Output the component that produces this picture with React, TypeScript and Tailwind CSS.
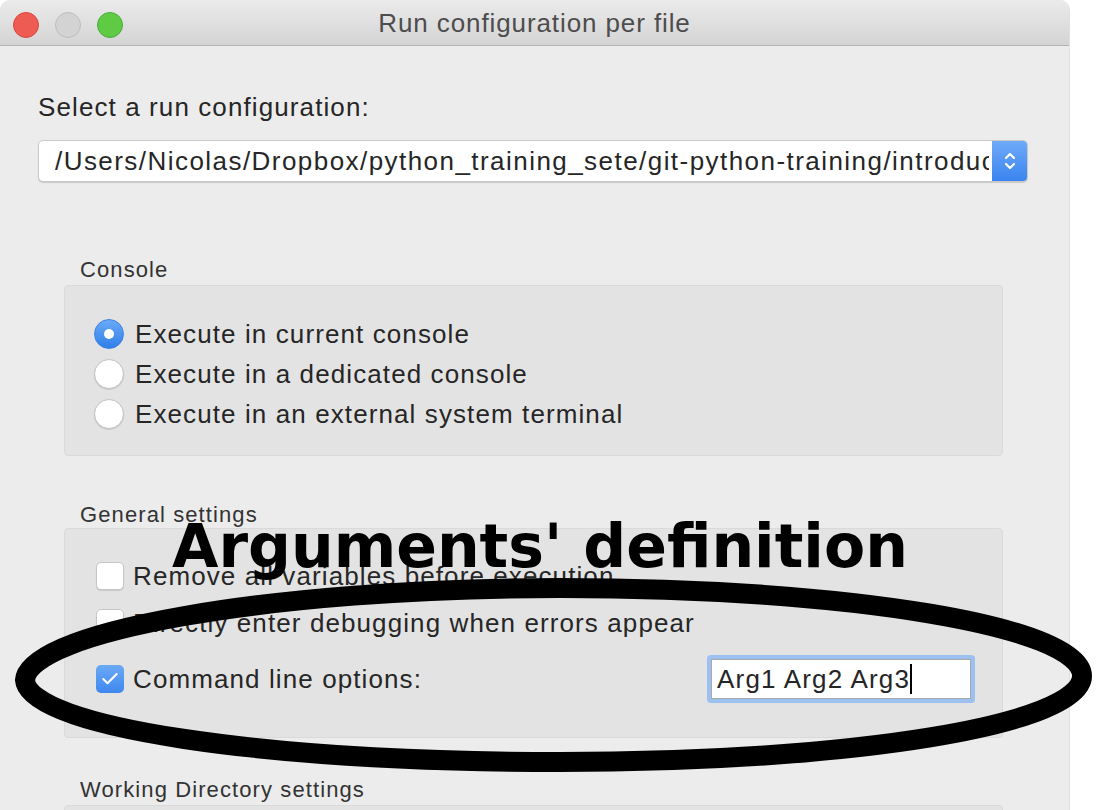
import { Check } from 'lucide-react';

const sans = "font-['Liberation_Sans',Arial,sans-serif]";

function Radio({ on }: { on?: boolean }) {
  if (on) {
    return (
      <span className="w-[30px] h-[30px] rounded-full bg-gradient-to-b from-[#6aaaf7] to-[#2f7ee9] border border-[#3b82e6] flex items-center justify-center shrink-0">
        <span className="w-[10px] h-[10px] rounded-full bg-white" />
      </span>
    );
  }
  return <span className="w-[30px] h-[30px] rounded-full bg-white border border-[#c2c2c2] shadow-[0_1px_1px_rgba(0,0,0,0.12)] shrink-0" />;
}

function Box({ on }: { on?: boolean }) {
  if (on) {
    return (
      <span className="w-[28px] h-[28px] rounded-[5px] bg-gradient-to-b from-[#6aa9f6] to-[#3e87ee] flex items-center justify-center shrink-0">
        <Check className="w-[20px] h-[20px] text-white" strokeWidth={2.5} />
      </span>
    );
  }
  return <span className="w-[28px] h-[28px] rounded-[5px] bg-white border border-[#c6c6c6] shadow-[0_1px_1px_rgba(0,0,0,0.12)] shrink-0" />;
}

export default function App() {
  const radios = [
    { label: 'Execute in current console', on: true },
    { label: 'Execute in a dedicated console', on: false },
    { label: 'Execute in an external system terminal', on: false },
  ];

  return (
    <div className={`relative w-[1113px] h-[810px] bg-white overflow-hidden ${sans}`}>
      {/* Window */}
      <div className="w-[1070px] h-full bg-[#ececec] rounded-tr-[10px] rounded-tl-[10px] overflow-hidden border-r border-[#e0e0e0]">
        {/* Title bar */}
        <div className="relative h-[46px] bg-gradient-to-b from-[#ebebeb] to-[#d4d4d4] border-b border-[#b3b3b3] flex items-center justify-center">
          <div className="absolute left-[13px] top-[12px] flex gap-[16px]">
            <span className="w-[26px] h-[26px] rounded-full bg-[#ee5b53] border border-[#d8463f]" />
            <span className="w-[26px] h-[26px] rounded-full bg-[#d3d3d3] border border-[#bdbdbd]" />
            <span className="w-[26px] h-[26px] rounded-full bg-[#5fcb45] border border-[#49aa3a]" />
          </div>
          <span className="text-[26px] tracking-[0.9px] text-[#4d4d4d] leading-none">Run configuration per file</span>
        </div>

        {/* Body */}
        <div className="pl-[38px] pt-[46px]">
          <div className="text-[26px] tracking-[1.1px] leading-[30px] text-[#262626]">Select a run configuration:</div>

          <div className="mt-[18px] w-[990px] h-[42px] flex bg-white rounded-[5px] border border-[#c9c9c9] shadow-[0_1px_1px_rgba(0,0,0,0.15)] overflow-hidden">
            <div className="w-[950px] pl-[16px] flex items-center overflow-hidden whitespace-nowrap text-[26px] tracking-[1.45px] text-[#262626]">
              /Users/Nicolas/Dropbox/python_training_sete/git-python-training/introduction/arguments.py
            </div>
            <div className="ml-auto w-[35px] h-full bg-gradient-to-b from-[#6eaaf8] to-[#3a83ef] flex items-center justify-center">
              <svg width="14" height="24" viewBox="0 0 14 24" fill="none" stroke="white" strokeWidth="2.2" strokeLinecap="round" strokeLinejoin="round">
                <path d="M3 9 L7 5 L11 9" />
                <path d="M3 15 L7 19 L11 15" />
              </svg>
            </div>
          </div>

          <div className="ml-[26px] w-[939px]">
            {/* Console group */}
            <div className="mt-[76px] pl-[16px] text-[22px] tracking-[1.1px] leading-[24px] text-[#333]">Console</div>
            <div className="mt-[3px] h-[171px] bg-[#e3e3e3] border border-[#dadada] rounded-[4px] pt-[28px] pl-[29px] flex flex-col">
              {radios.map((r) => (
                <div key={r.label} className="h-[40px] flex items-center gap-[11px]">
                  <Radio on={r.on} />
                  <span className="text-[26px] tracking-[1.1px] text-[#262626]">{r.label}</span>
                </div>
              ))}
            </div>

            {/* General settings group */}
            <div className="mt-[47px] pl-[16px] text-[22px] tracking-[1.1px] leading-[24px] text-[#333]">General settings</div>
            <div className="mt-[1px] h-[210px] bg-[#e3e3e3] border border-[#dadada] rounded-[4px] pt-[27px] pl-[31px] pr-[27px] flex flex-col">
              <div className="h-[40px] flex items-center gap-[9px]">
                <Box />
                <span className="text-[26px] tracking-[1.1px] text-[#262626]">Remove all variables before execution</span>
              </div>
              <div className="mt-[7px] h-[40px] flex items-center gap-[9px]">
                <Box />
                <span className="text-[26px] tracking-[1.1px] text-[#262626]">Directly enter debugging when errors appear</span>
              </div>
              <div className="mt-[12px] h-[48px] flex items-center justify-between">
                <div className="flex items-center gap-[9px]">
                  <Box on />
                  <span className="text-[26px] tracking-[1.1px] text-[#262626]">Command line options:</span>
                </div>
                <div className="w-[268px] h-[48px] rounded-[4px] bg-[#9cc0f0] p-[4px]">
                  <div className="w-full h-full bg-white border border-[#a9a9a9] flex items-center pl-[5px] text-[26px] tracking-[1.2px] text-[#262626]">
                    Arg1 Arg2 Arg3
                    <span className="w-[2px] h-[30px] bg-black" />
                  </div>
                </div>
              </div>
            </div>

            {/* Working directory group */}
            <div className="mt-[40px] pl-[16px] text-[22px] tracking-[1.1px] leading-[24px] text-[#333]">Working Directory settings</div>
            <div className="mt-[3px] h-[60px] bg-[#e3e3e3] border border-[#dadada] rounded-[4px]" />
          </div>
        </div>
      </div>

      {/* Annotation overlay */}
      <svg className="absolute inset-0 pointer-events-none" width="1113" height="810" viewBox="0 0 1113 810">
        <path
          d="M 25 680 C 28 632, 269 588, 560 588 C 851 588, 1082 627, 1082 676 C 1082 725, 851 762, 560 762 C 269 762, 28 728, 25 680 Z"
          fill="none"
          stroke="black"
          strokeWidth="20"
        />
      </svg>
      <div className="absolute left-[172px] top-[516px] text-[60px] leading-[60px] font-bold text-black whitespace-nowrap font-['DejaVu_Sans',sans-serif]">
        Arguments' definition
      </div>
    </div>
  );
}
